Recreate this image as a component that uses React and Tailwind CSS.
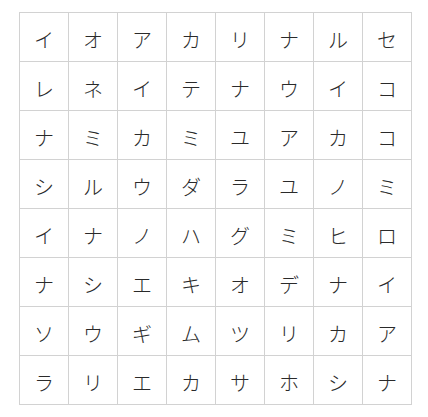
const rows = [
  ["イ", "オ", "ア", "カ", "リ", "ナ", "ル", "セ"],
  ["レ", "ネ", "イ", "テ", "ナ", "ウ", "イ", "コ"],
  ["ナ", "ミ", "カ", "ミ", "ユ", "ア", "カ", "コ"],
  ["シ", "ル", "ウ", "ダ", "ラ", "ユ", "ノ", "ミ"],
  ["イ", "ナ", "ノ", "ハ", "グ", "ミ", "ヒ", "ロ"],
  ["ナ", "シ", "エ", "キ", "オ", "デ", "ナ", "イ"],
  ["ソ", "ウ", "ギ", "ム", "ツ", "リ", "カ", "ア"],
  ["ラ", "リ", "エ", "カ", "サ", "ホ", "シ", "ナ"],
]

export default function App() {
  return (
    <div className="min-h-screen bg-white pl-[19px] pt-[12px]">
      <table className="border-collapse font-['Noto_Sans_CJK_JP',sans-serif] text-[20px] font-light text-[#2a2a2a]">
        <tbody>
          {rows.map((row, i) => (
            <tr key={i}>
              {row.map((ch, j) => (
                <td
                  key={j}
                  className="h-[49px] w-[49px] border border-[#d2d2d2] p-0 pt-[6px] text-center align-middle leading-none"
                >
                  {ch}
                </td>
              ))}
            </tr>
          ))}
        </tbody>
      </table>
    </div>
  )
}
